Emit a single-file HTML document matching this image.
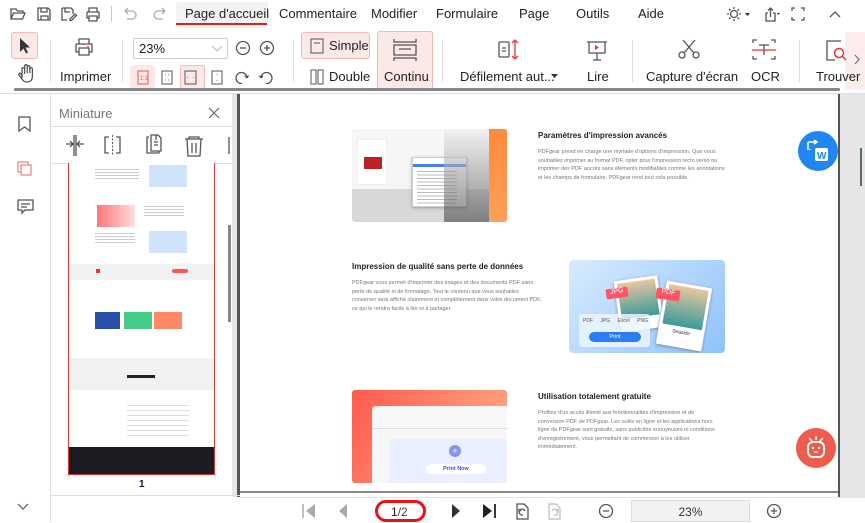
<!DOCTYPE html>
<html><head><meta charset="utf-8">
<style>
*{box-sizing:border-box;margin:0;padding:0}
body{width:865px;height:522px;overflow:hidden;background:#fff;font-family:"Liberation Sans","Noto Sans CJK SC",sans-serif;color:#222;position:relative}
.a{position:absolute}
.menu span{position:absolute;top:6px;font-size:13px;color:#222}
.tb{font-size:13px;color:#222}
svg{position:absolute;overflow:visible}
.ln{fill:none;stroke:#555;stroke-width:1.3}
.t{position:absolute;font-size:5.5px;line-height:8.6px;color:#777}
.h{position:absolute;font-size:8px;font-weight:bold;color:#222}
</style></head><body>
<!-- menu bar -->
<svg style="left:10px;top:6px" width="110" height="18">
<path class="ln" d="M1 13V3h5l1.5 2H13v2M1 13l2.5-6H15l-2.5 6z"/>
<path class="ln" d="M28 2h10l2 2v10H28zM31 2v4h6V2M31 14v-4h7v4"/>
<path class="ln" d="M52 2h9l2 2v4M52 2v12h5M55 2v4h5M60 13l5-5 1.5 1.5-5 5h-1.5z"/>
<path class="ln" d="M77 6h12v6h-2M77 6v6h2M79 6V2h8v4M79 10h8v5h-8z"/>
</svg>
<div class="a" style="left:111px;top:6px;width:1px;height:16px;background:#ccc"></div>
<svg style="left:122px;top:6px" width="50" height="18">
<path d="M3 5h7a4 4 0 010 8H5M3 5l3-3M3 5l3 3" fill="none" stroke="#aaa" stroke-width="1.3"/>
<path d="M43 5h-7a4 4 0 000 8h5M43 5l-3-3M43 5l-3 3" fill="none" stroke="#aaa" stroke-width="1.3"/>
</svg>
<div class="a" style="left:176px;top:2px;width:92px;height:26px;background:#f3f3f3;border-radius:3px"></div>
<div class="a" style="left:176px;top:23px;width:91px;height:2px;background:#e0201c"></div>
<div class="menu">
<span style="left:185px">Page d'accueil</span>
<span style="left:279px">Commentaire</span>
<span style="left:371px">Modifier</span>
<span style="left:436px">Formulaire</span>
<span style="left:519px">Page</span>
<span style="left:576px">Outils</span>
<span style="left:638px">Aide</span>
</div>
<svg style="left:726px;top:6px" width="130" height="18">
<circle cx="8" cy="8" r="3.5" class="ln"/><path class="ln" d="M8 1v2M8 13v2M1 8h2M13 8h2M3 3l1.5 1.5M11.5 11.5L13 13M3 13l1.5-1.5M11.5 4.5L13 3"/>
<path d="M19 7l2.5 3 2.5-3z" fill="#333"/>
<path class="ln" d="M42 7h-2v8h9V7h-2M44.5 11V2M42 4.5l2.5-2.5 2.5 2.5"/><path d="M51 7l1.5 2 1.5-2z" fill="#333"/>
<path class="ln" d="M66 5V2h3M75 2h3v3M78 11v3h-3M69 14h-3v-3"/>
<path class="ln" d="M104 11l5-5 5 5"/>
</svg>
<!-- toolbar -->
<div class="a" style="left:11px;top:32px;width:27px;height:27px;background:#fde8e8;border:1px solid #f4b8b8;border-radius:3px"></div>
<svg style="left:17px;top:37px" width="20" height="50"><path d="M3 1v14l3.5-3.5 2.5 5 2-1-2.5-5H13z" fill="#333"/>
<path class="ln" d="M5 41v-9a1.3 1.3 0 012.6 0v5V29a1.3 1.3 0 012.6 0v7-6a1.3 1.3 0 012.6 0v6-4a1.3 1.3 0 012.6 0v7c0 4-2 6-5 6s-4-1-5.5-3l-3-4a1.3 1.3 0 012-1.5L5 40"/></svg>
<div class="a" style="left:50px;top:40px;width:1px;height:42px;background:#ddd"></div>
<svg style="left:74px;top:38px" width="22" height="20"><path class="ln" d="M5 6V1h10v5M2 6h16v8h-3M2 6v8h3M5 10h10v7H5z"/><rect x="13" y="8" width="2" height="1" fill="#e53"/></svg>
<div class="a tb" style="left:60px;top:69px">Imprimer</div>
<div class="a" style="left:122px;top:40px;width:1px;height:42px;background:#ddd"></div>
<div class="a" style="left:133px;top:38px;width:95px;height:21px;border:1px solid #ccc;border-radius:2px;font-size:13px;padding:2px 5px">23%</div>
<svg style="left:212px;top:46px" width="10" height="6"><path d="M0 0l5 5 5-5" fill="none" stroke="#bbb"/></svg>
<svg style="left:235px;top:40px" width="40" height="16"><circle cx="8" cy="8" r="6.5" class="ln"/><path class="ln" d="M5 8h6"/><circle cx="32" cy="8" r="6.5" class="ln"/><path class="ln" d="M29 8h6M32 5v6"/></svg>
<div class="a" style="left:130px;top:65px;width:25px;height:25px;background:#fde8e8;border-radius:3px"></div>
<div class="a" style="left:180px;top:65px;width:25px;height:25px;background:#fde8e8;border:1px solid #f4b8b8;border-radius:3px"></div>
<svg style="left:137px;top:70px" width="140" height="16">
<rect x="1" y="1" width="10" height="13" fill="none" stroke="#e55" stroke-width="1"/><text x="2.5" y="10" font-size="6" fill="#e55" font-family="Liberation Sans">1:1</text>
<rect x="25" y="1" width="10" height="13" fill="none" stroke="#555"/><path d="M28 5h1M31 5h1M28 10h1M31 10h1" stroke="#e55"/>
<rect x="48" y="1" width="11" height="13" fill="none" stroke="#555"/><path d="M50 7.5h1M56 7.5h1" stroke="#e55"/>
<rect x="75" y="1" width="10" height="13" fill="none" stroke="#555"/><path d="M80 4v1M80 10v1" stroke="#e55"/>
<path class="ln" d="M110 8a5.5 5.5 0 10-5 5.5M110 8l-2-2M110 8l1.5-2.5"/>
<path class="ln" d="M124 8a5.5 5.5 0 115 5.5M124 8l2-2M124 8l-1.5-2.5"/>
</svg>
<div class="a" style="left:293px;top:40px;width:1px;height:42px;background:#ddd"></div>
<div class="a" style="left:301px;top:32px;width:69px;height:27px;background:#fde8e8;border:1px solid #f4b8b8;border-radius:3px"></div>
<svg style="left:310px;top:38px" width="16" height="50"><rect x="1" y="1" width="12" height="14" fill="none" stroke="#555"/><path d="M4 5h6" stroke="#555"/>
<rect x="1" y="32" width="5" height="14" fill="none" stroke="#555"/><rect x="8" y="32" width="5" height="14" fill="none" stroke="#555"/></svg>
<div class="a tb" style="left:329px;top:38px">Simple</div>
<div class="a tb" style="left:329px;top:69px">Double</div>
<div class="a" style="left:377px;top:31px;width:56px;height:59px;background:#fde8e8;border:1px solid #f4b8b8;border-radius:3px"></div>
<svg style="left:393px;top:38px" width="26" height="24"><path class="ln" d="M1 1v3h22V1M1 23v-3h22v3M1 7h22v10H1zM6 11h12"/></svg>
<div class="a tb" style="left:384px;top:69px">Continu</div>
<div class="a" style="left:442px;top:40px;width:1px;height:42px;background:#ddd"></div>
<svg style="left:498px;top:39px" width="24" height="22"><rect x="1" y="3" width="10" height="15" class="ln" rx="1"/><path class="ln" d="M4 9h4M4 12h4"/><path d="M17 1v19M14 4l3-3 3 3M14 17l3 3 3-3" fill="none" stroke="#e33" stroke-width="1.3"/></svg>
<div class="a tb" style="left:460px;top:69px">Défilement aut...</div>
<svg style="left:551px;top:74px" width="8" height="5"><path d="M0 0h7l-3.5 4z" fill="#333"/></svg>
<svg style="left:586px;top:40px" width="22" height="22"><path class="ln" d="M1 2h20M3 2v11h16V2M11 13v7M7 20h8"/><path d="M9 5v5l4-2.5z" fill="#e33"/></svg>
<div class="a tb" style="left:587px;top:69px">Lire</div>
<div class="a" style="left:632px;top:40px;width:1px;height:42px;background:#ddd"></div>
<svg style="left:678px;top:39px" width="22" height="22"><circle cx="4" cy="16" r="3" class="ln"/><circle cx="18" cy="16" r="3" class="ln"/><path class="ln" d="M6 14L17 1M16 14L5 1"/></svg>
<div class="a tb" style="left:646px;top:69px">Capture d'écran</div>
<svg style="left:752px;top:39px" width="24" height="22"><path class="ln" d="M1 4V1h4M19 1h4v3M23 17v3h-4M5 20H1v-3M7 6h10M12 6v10"/><path d="M0 11h24" stroke="#e33" stroke-width="1.3"/></svg>
<div class="a tb" style="left:751px;top:69px">OCR</div>
<div class="a" style="left:799px;top:40px;width:1px;height:42px;background:#ddd"></div>
<div class="a" style="left:845px;top:32px;width:20px;height:58px;background:#fdecec"></div>
<svg style="left:826px;top:40px" width="22" height="22"><path class="ln" d="M15 1H1v19h8"/><circle cx="13" cy="13" r="4.5" fill="none" stroke="#e33" stroke-width="1.5"/><path d="M16 16l4 4" stroke="#e33" stroke-width="1.5"/></svg>
<div class="a tb" style="left:816px;top:69px">Trouver</div>
<svg style="left:854px;top:55px" width="6" height="10"><path d="M1 0l4 4.5L1 9" fill="none" stroke="#666"/></svg>
<div class="a" style="left:14px;top:88px;width:826px;height:3px;background:#888;border-radius:1px"></div>
<div class="a" style="left:0;top:93px;width:865px;height:1px;background:#ddd"></div>
<!-- left rail -->
<div class="a" style="left:50px;top:94px;width:1px;height:428px;background:#ddd"></div>
<svg style="left:17px;top:116px" width="18" height="110">
<path class="ln" d="M2 1h11v14l-5.5-4L2 15z"/>
<rect x="1" y="46" width="10" height="10" fill="none" stroke="#f08888" stroke-width="1.3"/><rect x="4" y="49" width="10" height="10" fill="#fff" stroke="#f08888" stroke-width="1.3"/>
<path class="ln" d="M1 84h15v10H8l-3 3v-3H1zM4 88h9M4 91h6"/>
</svg>
<svg style="left:17px;top:503px" width="12" height="8"><path d="M1 1l5 5 5-5" fill="none" stroke="#555" stroke-width="1.2"/></svg>
<!-- thumb panel -->
<div class="a" style="left:59px;top:106px;font-size:13px;color:#777">Miniature</div>
<svg style="left:208px;top:107px" width="12" height="12"><path d="M1 1l10 10M11 1L1 11" stroke="#666" stroke-width="1.2"/></svg>
<div class="a" style="left:51px;top:126px;width:181px;height:1px;background:#ddd"></div>
<svg style="left:65px;top:134px" width="170" height="24">
<path class="ln" d="M1 10h7M5 7l3 3-3 3M19 10h-7M15 7l-3 3 3 3M9 1v21M11 1v21"/>
<path class="ln" d="M44 3h-4v16h4M51 3h4v16h-4"/><path d="M47.5 1v21" stroke="#555" stroke-dasharray="2 1.5"/>
<path class="ln" d="M84 3h-2v16h12v-2M86 1h7l3 3v13H86zM89 8h4M89 11h4M91 1v5"/>
<path class="ln" d="M120 5h18M124 5v-2h10v2M122 5l1 17h12l1-17M127 9v10M131 9v10"/>
<path class="ln" d="M164 3v17"/>
</svg>
<div class="a" style="left:51px;top:163px;width:181px;height:1px;background:#ddd"></div>
<div class="a" style="left:68px;top:163px;width:147px;height:312px;border:1px solid #e03030;border-top:none;background:#fff;overflow:hidden">
 <div class="a" style="left:26px;top:6px;width:44px;height:12px;background:repeating-linear-gradient(#ccc 0 1px,#fff 1px 3px)"></div>
 <div class="a" style="left:80px;top:2px;width:38px;height:22px;background:#cfe4fb"></div>
 <div class="a" style="left:28px;top:42px;width:38px;height:22px;background:linear-gradient(90deg,#f77,#fdd)"></div>
 <div class="a" style="left:75px;top:43px;width:40px;height:10px;background:repeating-linear-gradient(#ccc 0 1px,#fff 1px 3px)"></div>
 <div class="a" style="left:26px;top:70px;width:40px;height:12px;background:repeating-linear-gradient(#ccc 0 1px,#fff 1px 3px)"></div>
 <div class="a" style="left:80px;top:68px;width:38px;height:22px;background:#cfe4fb"></div>
 <div class="a" style="left:0;top:101px;width:147px;height:16px;background:#f2f2f2"></div>
 <div class="a" style="left:27px;top:106px;width:4px;height:4px;background:#e33"></div>
 <div class="a" style="left:103px;top:106px;width:16px;height:4px;background:#f55;border-radius:2px"></div>
 <div class="a" style="left:26px;top:149px;width:25px;height:17px;background:#2a4fa8"></div>
 <div class="a" style="left:55px;top:149px;width:28px;height:17px;background:#4c8"></div>
 <div class="a" style="left:85px;top:149px;width:28px;height:17px;background:#f86"></div>
 <div class="a" style="left:0;top:195px;width:147px;height:32px;background:#f1f1f1"></div>
 <div class="a" style="left:58px;top:212px;width:28px;height:3px;background:#222"></div>
 <div class="a" style="left:58px;top:242px;width:62px;height:34px;background:repeating-linear-gradient(#ddd 0 1px,#fff 1px 5px)"></div>
 <div class="a" style="left:0;top:284px;width:147px;height:28px;background:#1c1b22"></div>
</div>
<div class="a" style="left:139px;top:479px;font-size:10px;font-weight:bold;color:#113">1</div>
<div class="a" style="left:228px;top:225px;width:3px;height:97px;background:#888"></div>
<div class="a" style="left:232px;top:94px;width:8px;height:403px;background:#e6e6e6"></div>
<div class="a" style="left:237px;top:94px;width:3px;height:403px;background:#555"></div>
<div class="a" style="left:51px;top:495px;width:189px;height:1px;background:#ddd"></div>
<!-- doc -->
<div class="a" style="left:838px;top:94px;width:2px;height:403px;background:#555"></div>
<div class="a" style="left:840px;top:94px;width:25px;height:403px;background:#e6e6e6"></div>
<div class="a" style="left:860px;top:148px;width:2px;height:38px;background:#666"></div>
<div class="a" style="left:240px;top:491px;width:598px;height:2px;background:#888"></div>
<!-- image1 -->
<div class="a" style="left:352px;top:129px;width:155px;height:93px;border-radius:3px;overflow:hidden;background:#d8d8d8">
 <div class="a" style="left:0;top:0;width:137px;height:60px;background:#f6f6f6"></div>
 <div class="a" style="left:5px;top:10px;width:30px;height:46px;background:#fff;border:1px solid #eee"></div>
 <div class="a" style="left:12px;top:28px;width:18px;height:12px;background:#b22"></div>
 <div class="a" style="left:60px;top:28px;width:55px;height:50px;background:#fff;border:1px solid #ccc;box-shadow:0 1px 3px #999"></div>
 <div class="a" style="left:61px;top:35px;width:53px;height:3px;background:#4a7ef0"></div>
 <div class="a" style="left:65px;top:42px;width:40px;height:34px;background:repeating-linear-gradient(#bbb 0 1px,#fff 1px 3.5px)"></div>
 <div class="a" style="left:92px;top:0;width:45px;height:93px;background:linear-gradient(#eee,#888 60%,#444);opacity:.6"></div>
 <div class="a" style="left:137px;top:0;width:18px;height:93px;background:linear-gradient(#ff8a3c,#ffa058)"></div>
</div>
<div class="h" style="left:538px;top:131px">Paramètres d'impression avancés</div>
<div class="t" style="left:538px;top:148px;width:190px">PDFgear prend en charge une myriade d'options d'impression. Que vous souhaitiez imprimer au format PDF, opter pour l'impression recto verso ou imprimer des PDF ancrés sans éléments modifiables comme les annotations et les champs de formulaire, PDFgear rend tout cela possible.</div>
<!-- section2 -->
<div class="h" style="left:352px;top:262px">Impression de qualité sans perte de données</div>
<div class="t" style="left:352px;top:279px;width:190px">PDFgear vous permet d'imprimer des images et des documents PDF sans perte de qualité ni de formatage. Tout le contenu que vous souhaitez conserver sera affiché clairement et complètement dans votre document PDF, ce qui le rendra facile à lire et à partager.</div>
<div class="a" style="left:569px;top:260px;width:156px;height:93px;border-radius:4px;background:linear-gradient(135deg,#d8ebff,#8ec3fb);overflow:hidden">
 <div class="a" style="left:48px;top:18px;width:44px;height:52px;background:#fff;transform:rotate(-8deg);box-shadow:0 1px 3px #789"><div style="margin:3px;height:36px;background:linear-gradient(#e8c6a0,#3a9a9a)"></div></div>
 <div class="a" style="left:92px;top:24px;width:46px;height:64px;background:#fff;transform:rotate(10deg);box-shadow:0 1px 3px #789"><div style="margin:3px;height:40px;background:linear-gradient(#e8c6a0,#3a9a9a)"></div><div style="font-size:5px;text-align:center;color:#333">Seaside</div></div>
 <div class="a" style="left:37px;top:28px;width:22px;height:10px;background:#f56;border-radius:2px;color:#fff;font-size:7px;text-align:center;transform:rotate(-8deg)">JPG</div>
 <div class="a" style="left:87px;top:29px;width:24px;height:11px;background:#f56;border-radius:2px;color:#fff;font-size:7px;text-align:center;transform:rotate(8deg)">PDF</div>
 <div class="a" style="left:10px;top:54px;width:71px;height:33px;background:rgba(235,245,255,.85);border-radius:3px"></div>
 <div class="a" style="left:14px;top:58px;font-size:5px;color:#555;word-spacing:6px">PDF JPG Excel PNG</div>
 <div class="a" style="left:20px;top:72px;width:52px;height:10px;background:#2a7df5;border-radius:5px;color:#fff;font-size:5.5px;text-align:center;line-height:10px">Print</div>
</div>
<!-- section3 -->
<div class="a" style="left:352px;top:390px;width:155px;height:93px;border-radius:3px;overflow:hidden;background:linear-gradient(120deg,#ff5a4e,#ffb38a)">
 <div class="a" style="left:20px;top:16px;width:135px;height:77px;background:#f7f7f7;border-radius:4px 0 0 0"></div>
 <div class="a" style="left:20px;top:38px;width:135px;height:1px;background:#ddd"></div>
 <div class="a" style="left:37px;top:49px;width:118px;height:44px;background:#e9efff"></div>
 <div class="a" style="left:97px;top:55px;width:12px;height:12px;border-radius:50%;background:#7f96f7;color:#fff;font-size:9px;text-align:center;line-height:12px">+</div>
 <div class="a" style="left:74px;top:74px;width:60px;height:10px;background:#fff;border-radius:5px;color:#3a4fe0;font-size:5.5px;font-weight:bold;text-align:center;line-height:10px">Print Now</div>
</div>
<div class="h" style="left:538px;top:392px">Utilisation totalement gratuite</div>
<div class="t" style="left:538px;top:409px;width:180px">Profitez d'un accès illimité aux fonctionnalités d'impression et de conversion PDF de PDFgear. Les outils en ligne et les applications hors ligne de PDFgear sont gratuits, sans publicités ennuyeuses ni conditions d'enregistrement, vous permettant de commencer à les utiliser immédiatement.</div>
<!-- floating -->
<div class="a" style="left:798px;top:131px;width:40px;height:40px;border-radius:50%;background:#1f87ef"></div>
<svg style="left:806px;top:139px" width="26" height="26"><path d="M2 3h9M2 3v8M8 1l3 2-3 2M4 11v-1" fill="none" stroke="#fff" stroke-width="1.5"/><rect x="9" y="9" width="13" height="13" rx="2" fill="#fff"/><text x="11" y="20" font-size="10" font-weight="bold" fill="#1f87ef" font-family="Liberation Sans">W</text></svg>
<div class="a" style="left:796px;top:428px;width:40px;height:40px;border-radius:50%;background:#ef5b4c"></div>
<svg style="left:804px;top:434px" width="24" height="28"><path d="M5 4l3 3M19 4l-3 3M12 2v4" stroke="#fff" stroke-width="1.5"/><rect x="4" y="8" width="16" height="15" rx="5" fill="none" stroke="#fff" stroke-width="2"/><circle cx="9" cy="14" r="1.2" fill="#fff"/><circle cx="15" cy="14" r="1.2" fill="#fff"/><path d="M10 18h4" stroke="#fff" stroke-width="1.3"/></svg>
<!-- bottom bar -->
<div class="a" style="left:240px;top:497px;width:625px;height:1px;background:#e4e4e4"></div>
<svg style="left:300px;top:503px" width="480" height="18">
<path d="M3 1v14" stroke="#aaa" stroke-width="1.5"/><path d="M15 1L6 8l9 7z" fill="#aaa"/>
<path d="M47 1L39 8l8 7z" fill="#aaa"/>
<path d="M152 1l8 7-8 7z" fill="#333"/>
<path d="M183 1l9 7-9 7z" fill="#222"/><path d="M195 1v14" stroke="#222" stroke-width="1.8"/>
<path class="ln" d="M217 1h7l4 4v11h-11zM225 8a3 3 0 10-2 4M221 8l-2-1.5 0 3"/>
<path d="M249 1h7l4 4v11h-11zM252 8a3 3 0 112 4M256 8l2-1.5v3" fill="none" stroke="#bbb" stroke-width="1.2"/>
<circle cx="306" cy="8" r="6.5" class="ln"/><path class="ln" d="M303 8h6"/>
<circle cx="474" cy="8" r="6.5" class="ln"/><path class="ln" d="M471 8h6M474 5v6"/>
</svg>
<div class="a" style="left:375px;top:500px;width:51px;height:22px;border:3px solid #ee1111;border-radius:11px;background:#fff"></div>
<div class="a" style="left:391px;top:505px;font-size:12px;color:#444"><span style="color:#402">1</span>/2</div>
<div class="a" style="left:631px;top:500px;width:119px;height:22px;background:#f2f2f2;border:1px solid #ddd;font-size:12px;text-align:center;line-height:22px;color:#333">23%</div>
</body></html>
